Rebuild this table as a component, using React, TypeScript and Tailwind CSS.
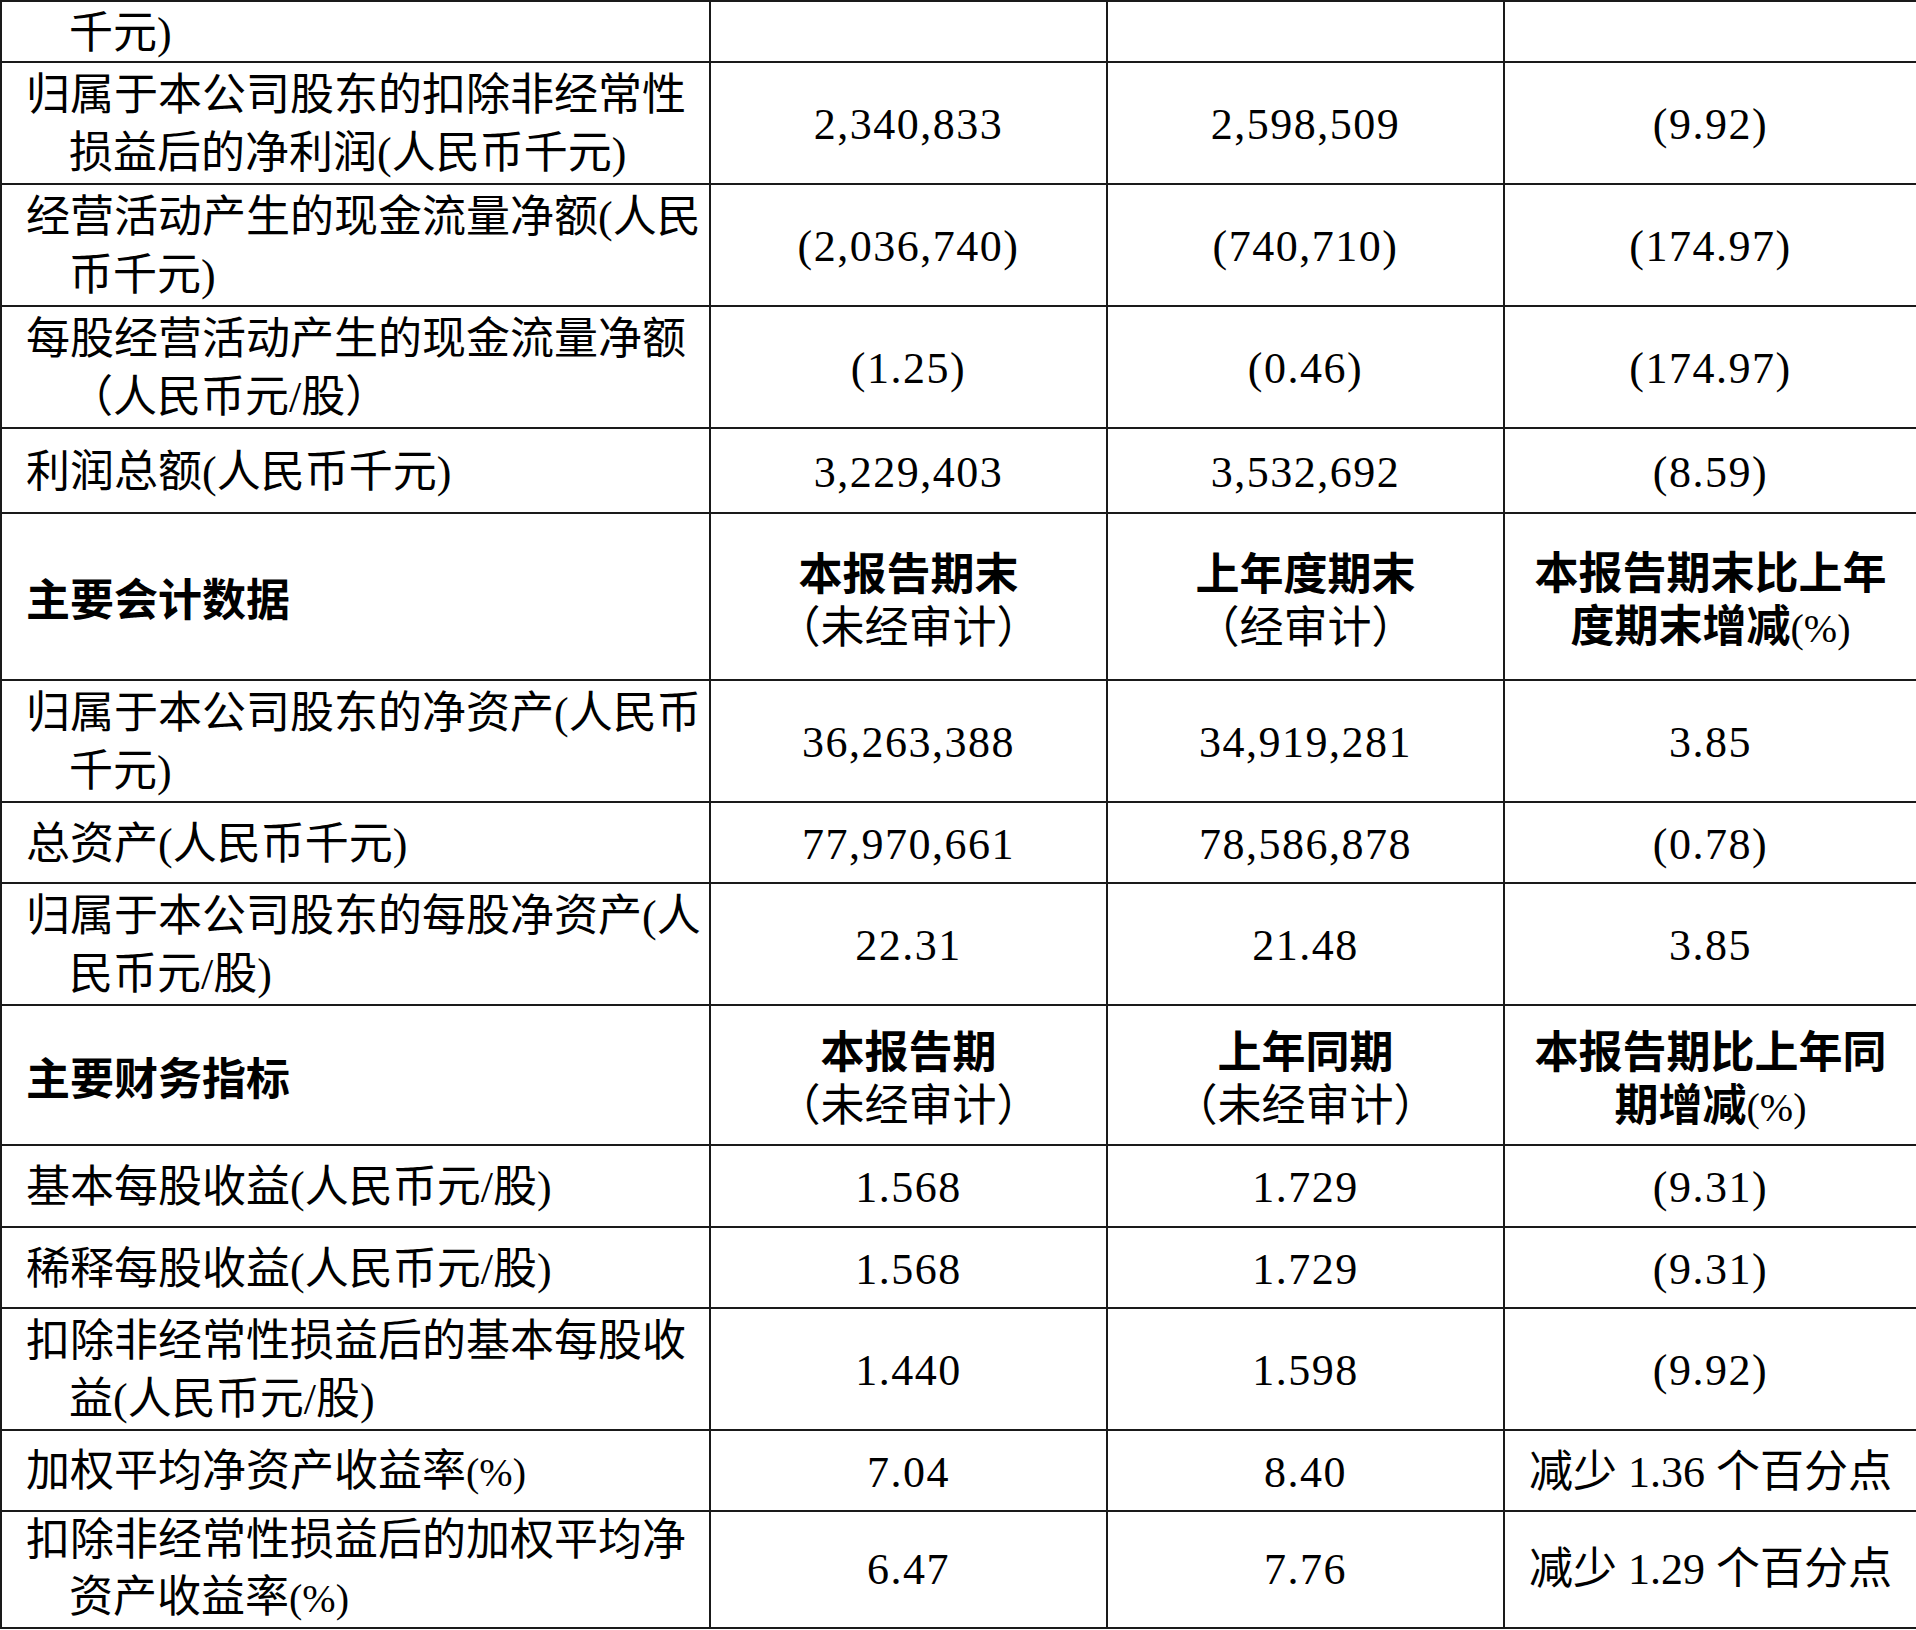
import type { ReactNode } from 'react';

type Row = {
  height: string;
  label: ReactNode[];
  values: ReactNode[];
  header?: boolean;
  spacing?: string;
};

const pct = <span className="text-[40px] font-normal">(%)</span>;

const rows: Row[] = [
  { height: 'h-[61px]', spacing: 'pt-[5px] leading-[54px]', label: ['', '千元)'], values: ['', '', ''] },
  {
    height: 'h-[122px]',
    label: ['归属于本公司股东的扣除非经常性', '损益后的净利润(人民币千元)'],
    values: ['2,340,833', '2,598,509', '(9.92)'],
  },
  {
    height: 'h-[122px]',
    label: ['经营活动产生的现金流量净额(人民', '币千元)'],
    values: ['(2,036,740)', '(740,710)', '(174.97)'],
  },
  {
    height: 'h-[122px]',
    label: ['每股经营活动产生的现金流量净额', '（人民币元/股）'],
    values: ['(1.25)', '(0.46)', '(174.97)'],
  },
  {
    height: 'h-[85px]',
    label: ['利润总额(人民币千元)'],
    values: ['3,229,403', '3,532,692', '(8.59)'],
  },
  {
    height: 'h-[167px]',
    header: true,
    label: ['主要会计数据'],
    values: [
      <>
        <div className="font-bold">本报告期末</div>
        <div>（未经审计）</div>
      </>,
      <>
        <div className="font-bold">上年度期末</div>
        <div>（经审计）</div>
      </>,
      <>
        <div className="font-bold">本报告期末比上年</div>
        <div className="font-bold">度期末增减{pct}</div>
      </>,
    ],
  },
  {
    height: 'h-[122px]',
    label: ['归属于本公司股东的净资产(人民币', '千元)'],
    values: ['36,263,388', '34,919,281', '3.85'],
  },
  {
    height: 'h-[81px]',
    label: ['总资产(人民币千元)'],
    values: ['77,970,661', '78,586,878', '(0.78)'],
  },
  {
    height: 'h-[122px]',
    label: ['归属于本公司股东的每股净资产(人', '民币元/股)'],
    values: ['22.31', '21.48', '3.85'],
  },
  {
    height: 'h-[140px]',
    header: true,
    label: ['主要财务指标'],
    values: [
      <>
        <div className="font-bold">本报告期</div>
        <div>（未经审计）</div>
      </>,
      <>
        <div className="font-bold">上年同期</div>
        <div>（未经审计）</div>
      </>,
      <>
        <div className="font-bold">本报告期比上年同</div>
        <div className="font-bold">期增减{pct}</div>
      </>,
    ],
  },
  {
    height: 'h-[82px]',
    label: ['基本每股收益(人民币元/股)'],
    values: ['1.568', '1.729', '(9.31)'],
  },
  {
    height: 'h-[81px]',
    label: ['稀释每股收益(人民币元/股)'],
    values: ['1.568', '1.729', '(9.31)'],
  },
  {
    height: 'h-[122px]',
    label: ['扣除非经常性损益后的基本每股收', '益(人民币元/股)'],
    values: ['1.440', '1.598', '(9.92)'],
  },
  {
    height: 'h-[81px]',
    label: [<>加权平均净资产收益率{pct}</>],
    values: ['7.04', '8.40', <span className="tracking-normal">减少 1.36 个百分点</span>],
  },
  {
    height: 'h-[116px]',
    spacing: 'pt-0 leading-[57px]',
    label: ['扣除非经常性损益后的加权平均净', <>资产收益率{pct}</>],
    values: ['6.47', '7.76', <span className="tracking-normal">减少 1.29 个百分点</span>],
  },
];

export default function App() {
  return (
    <div className="min-h-screen bg-white text-black [font-family:'Liberation_Serif','Noto_Sans_CJK_SC',serif]">
      <table className="w-[1916px] table-fixed border-collapse text-[44px]">
        <colgroup>
          <col className="w-[709px]" />
          <col className="w-[397px]" />
          <col className="w-[397px]" />
          <col className="w-[413px]" />
        </colgroup>
        <tbody>
          {rows.map((row, i) => {
            const spacing =
              row.spacing ?? (row.header ? 'pt-[10px] leading-[53px]' : 'pt-[4px] leading-[58px]');
            return (
              <tr key={i} className={row.height}>
                <td
                  className={`border-2 border-[#1a1a1a] p-0 pl-6 align-middle ${spacing} ${
                    row.header ? 'font-bold' : ''
                  }`}
                >
                  {row.label.map((line, j) =>
                    line === '' ? null : (
                      <div key={j} className={`whitespace-nowrap ${j > 0 ? 'pl-[43px]' : ''}`}>
                        {line}
                      </div>
                    ),
                  )}
                </td>
                {row.values.map((value, j) => (
                  <td
                    key={j}
                    className={`border-2 border-[#1a1a1a] p-0 text-center align-middle whitespace-nowrap ${spacing} ${
                      row.header ? '' : 'tracking-[1.5px]'
                    }`}
                  >
                    {value}
                  </td>
                ))}
              </tr>
            );
          })}
        </tbody>
      </table>
    </div>
  );
}
